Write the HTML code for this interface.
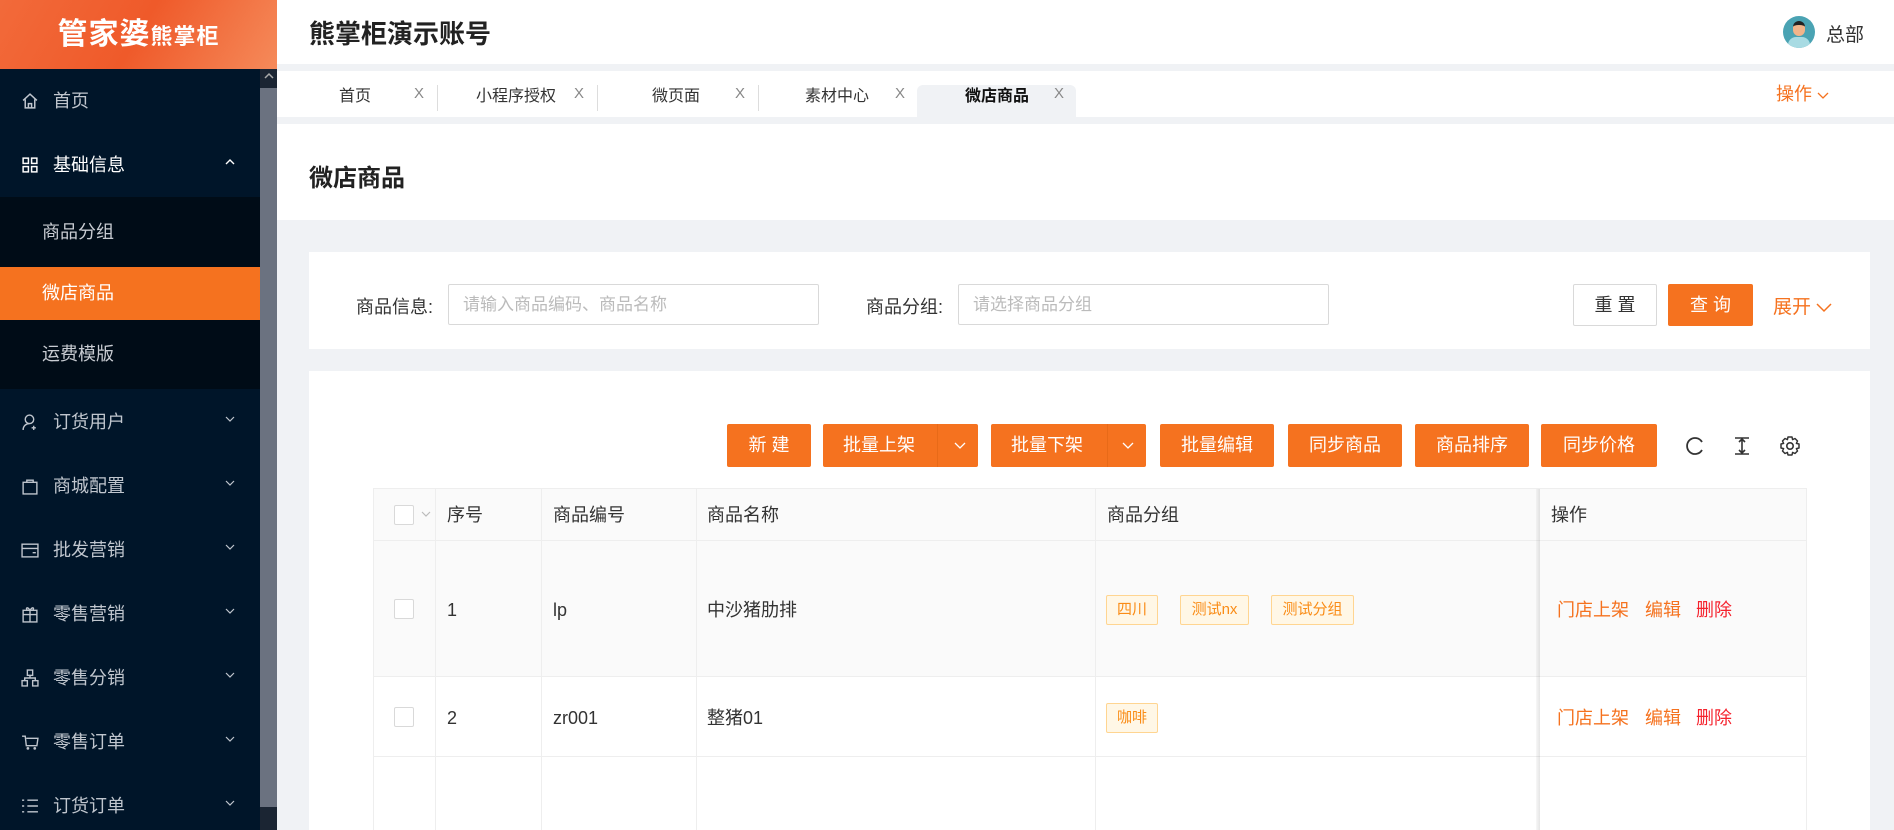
<!DOCTYPE html>
<html><head><meta charset="utf-8"><style>
*{box-sizing:border-box;margin:0;padding:0}
html,body{width:1894px;height:830px;overflow:hidden}
body{background:#f0f2f5;font-family:"Liberation Sans","Noto Sans CJK SC",sans-serif;position:relative;color:#333}
.abs{position:absolute}
#side{left:0;top:0;width:277px;height:830px;background:#001529}
#logo{left:0;top:0;width:277px;height:69px;background:linear-gradient(120deg,#f26a3a 0%,#ef5a2a 50%,#f58a5a 100%);color:#fff;font-size:30px;font-weight:bold;text-align:center;line-height:69px;letter-spacing:1px}
#logo small{font-size:22px;font-weight:bold}
.mi{position:absolute;left:0;width:260px;height:64px;color:#c0c6ce;font-size:18px;line-height:64px}
.mi .t{position:absolute;left:53px}
.mi .ic{position:absolute;left:21px;top:23px;width:18px;height:18px}
.mi .ar{position:absolute;left:225px;top:24px;width:10px;height:10px}
.sub{position:absolute;left:0;width:260px;height:64px;color:#c8ccd2;font-size:18px;line-height:64px;padding-left:42px;background:#000c17}
#sb{left:260px;top:69px;width:17px;height:761px;background:#1b2533}
#sbt{left:260px;top:88px;width:17px;height:719px;background:#6b7280}
.hdr{left:277px;top:0;width:1617px;height:64px;background:#fff}
.tabs{left:277px;top:71px;width:1617px;height:46px;background:#fff}
.tab{position:absolute;top:0;height:46px;line-height:52px;font-size:16px;color:#333}
.x{position:absolute;top:0;font-size:15px;color:#888;line-height:46px}
.sep{position:absolute;top:14px;width:1px;height:26px;background:#ddd}
.btn{position:absolute;top:424px;height:43px;background:#f5721f;color:#fff;font-size:18px;line-height:43px;text-align:center;border-radius:2px}
.th,.td{position:absolute;font-size:18px;color:#333;line-height:24px}
.tag{position:absolute;height:30px;border:1px solid #ffd591;background:#fff7e6;color:#fa8c16;font-size:15px;line-height:28px;text-align:center;border-radius:2px}
.cb{position:absolute;left:394px;width:20px;height:20px;border:1px solid #d9d9d9;border-radius:2px;background:#fff}
</style></head><body>
<div id="side" class="abs"></div>
<div id="logo" class="abs">管家婆<small>熊掌柜</small></div>
<div id="sb" class="abs"></div><div id="sbt" class="abs"></div>
<svg class="abs" style="left:263px;top:72px" width="12" height="8"><path d="M2 6L6 2L10 6" stroke="#aaa" fill="none" stroke-width="1.5"/></svg>

<div class="mi" style="top:69px"><svg class="ic" viewBox="0 0 17 17"><path d="M2 8L8.5 2L15 8M4 7V15H13V7M7 15V11H10V15" stroke="#c0c6ce" fill="none" stroke-width="1.4"/></svg><span class="t">首页</span></div>
<div class="mi" style="top:133px;color:#fff"><svg class="ic" viewBox="0 0 17 17"><rect x="2" y="2" width="5" height="5" stroke="#fff" fill="none" stroke-width="1.4"/><rect x="10" y="2" width="5" height="5" stroke="#fff" fill="none" stroke-width="1.4"/><rect x="2" y="10" width="5" height="5" stroke="#fff" fill="none" stroke-width="1.4"/><rect x="10" y="10" width="5" height="5" stroke="#fff" fill="none" stroke-width="1.4"/></svg><span class="t">基础信息</span><svg class="ar" viewBox="0 0 10 10"><path d="M1 7L5 3L9 7" stroke="#fff" fill="none" stroke-width="1.4"/></svg></div>
<div class="sub" style="top:197px;height:70px;line-height:70px">商品分组</div>
<div class="sub" style="top:267px;height:53px;line-height:53px;background:#f5721f;color:#fff">微店商品</div>
<div class="sub" style="top:320px;height:69px;line-height:69px">运费模版</div>

<div class="mi" style="top:390px"><svg class="ic" viewBox="0 0 17 17"><circle cx="8" cy="6" r="4" stroke="#c0c6ce" fill="none" stroke-width="1.3"/><path d="M2 16C2 12 5 10 8 10M12 12V16M10 14H14" stroke="#c0c6ce" fill="none" stroke-width="1.3"/></svg><span class="t">订货用户</span><svg class="ar" viewBox="0 0 10 10"><path d="M1 3L5 7L9 3" stroke="#c0c6ce" fill="none" stroke-width="1.2"/></svg></div>
<div class="mi" style="top:454px"><svg class="ic" viewBox="0 0 17 17"><rect x="2" y="5" width="13" height="11" stroke="#c0c6ce" fill="none" stroke-width="1.3"/><path d="M5.5 5V3H11.5V5" stroke="#c0c6ce" fill="none" stroke-width="1.3"/></svg><span class="t">商城配置</span><svg class="ar" viewBox="0 0 10 10"><path d="M1 3L5 7L9 3" stroke="#c0c6ce" fill="none" stroke-width="1.2"/></svg></div>
<div class="mi" style="top:518px"><svg class="ic" viewBox="0 0 17 17"><rect x="1" y="3" width="15" height="12" stroke="#c0c6ce" fill="none" stroke-width="1.3"/><path d="M1 7H16M11 11H14" stroke="#c0c6ce" stroke-width="1.3"/></svg><span class="t">批发营销</span><svg class="ar" viewBox="0 0 10 10"><path d="M1 3L5 7L9 3" stroke="#c0c6ce" fill="none" stroke-width="1.2"/></svg></div>
<div class="mi" style="top:582px"><svg class="ic" viewBox="0 0 17 17"><rect x="2" y="5" width="13" height="11" stroke="#c0c6ce" fill="none" stroke-width="1.3"/><path d="M2 9H15M8.5 5V16M8.5 5C6 1 4 3 6 5M8.5 5C11 1 13 3 11 5" stroke="#c0c6ce" fill="none" stroke-width="1.3"/></svg><span class="t">零售营销</span><svg class="ar" viewBox="0 0 10 10"><path d="M1 3L5 7L9 3" stroke="#c0c6ce" fill="none" stroke-width="1.2"/></svg></div>
<div class="mi" style="top:646px"><svg class="ic" viewBox="0 0 17 17"><rect x="6" y="1" width="5" height="5" stroke="#c0c6ce" fill="none" stroke-width="1.3"/><rect x="1" y="11" width="5" height="5" stroke="#c0c6ce" fill="none" stroke-width="1.3"/><rect x="11" y="11" width="5" height="5" stroke="#c0c6ce" fill="none" stroke-width="1.3"/><path d="M8.5 6V8.5H3.5V11M8.5 8.5H13.5V11" stroke="#c0c6ce" fill="none" stroke-width="1.3"/></svg><span class="t">零售分销</span><svg class="ar" viewBox="0 0 10 10"><path d="M1 3L5 7L9 3" stroke="#c0c6ce" fill="none" stroke-width="1.2"/></svg></div>
<div class="mi" style="top:710px"><svg class="ic" viewBox="0 0 17 17"><path d="M1 3H4L5 12H15L16 5H5" stroke="#c0c6ce" fill="none" stroke-width="1.3"/><circle cx="6.5" cy="14.5" r="1.3" fill="#c0c6ce"/><circle cx="13" cy="14.5" r="1.3" fill="#c0c6ce"/></svg><span class="t">零售订单</span><svg class="ar" viewBox="0 0 10 10"><path d="M1 3L5 7L9 3" stroke="#c0c6ce" fill="none" stroke-width="1.2"/></svg></div>
<div class="mi" style="top:774px"><svg class="ic" viewBox="0 0 17 17"><path d="M6 3H16M6 8.5H16M6 14H16M1 3H3M1 8.5H3M1 14H3" stroke="#c0c6ce" stroke-width="1.3"/></svg><span class="t">订货订单</span><svg class="ar" viewBox="0 0 10 10"><path d="M1 3L5 7L9 3" stroke="#c0c6ce" fill="none" stroke-width="1.2"/></svg></div>

<div class="abs hdr"></div>
<div class="abs" style="left:309px;top:14px;font-size:26px;font-weight:bold;color:#222">熊掌柜演示账号</div>
<div class="abs" style="left:1783px;top:16px;width:32px;height:32px;border-radius:50%;background:#4aa3b3;overflow:hidden"><div style="position:absolute;left:10px;top:5px;width:12px;height:15px;border-radius:6px;background:#f2b48a;border-top:4px solid #222"></div><div style="position:absolute;left:5px;top:21px;width:22px;height:14px;border-radius:8px 8px 0 0;background:#a8dbe3"></div></div>
<div class="abs" style="left:1826px;top:20px;font-size:19px;color:#333">总部</div>

<div class="abs tabs">
<div class="tab" style="left:62px">首页</div><div class="x" style="left:137px">X</div><div class="sep" style="left:160px"></div>
<div class="tab" style="left:199px">小程序授权</div><div class="x" style="left:297px">X</div><div class="sep" style="left:320px"></div>
<div class="tab" style="left:375px">微页面</div><div class="x" style="left:458px">X</div><div class="sep" style="left:481px"></div>
<div class="tab" style="left:528px">素材中心</div><div class="x" style="left:618px">X</div>
<div style="position:absolute;left:640px;top:14px;width:159px;height:32px;background:#f0f2f5;border-radius:6px 6px 0 0"></div>
<div class="tab" style="left:688px;font-weight:bold;color:#111">微店商品</div><div class="x" style="left:777px">X</div>
<div class="tab" style="left:1499px;color:#f5721f;font-size:18px;line-height:46px">操作 <svg width="12" height="8"><path d="M1 1L6 6L11 1" stroke="#f5721f" fill="none" stroke-width="1.3"/></svg></div>
</div>

<div class="abs" style="left:277px;top:124px;width:1617px;height:96px;background:#fff"></div>
<div class="abs" style="left:309px;top:158px;font-size:24px;font-weight:bold;color:#222">微店商品</div>

<div class="abs" style="left:309px;top:252px;width:1561px;height:97px;background:#fff"></div>
<div class="abs" style="left:356px;top:293px;font-size:18px;color:#333">商品信息:</div>
<div class="abs" style="left:448px;top:284px;width:371px;height:41px;border:1px solid #d9d9d9;border-radius:2px;font-size:17px;color:#bbb;line-height:39px;padding-left:14px">请输入商品编码、商品名称</div>
<div class="abs" style="left:866px;top:293px;font-size:18px;color:#333">商品分组:</div>
<div class="abs" style="left:958px;top:284px;width:371px;height:41px;border:1px solid #d9d9d9;border-radius:2px;font-size:17px;color:#bbb;line-height:39px;padding-left:14px">请选择商品分组</div>
<div class="abs" style="left:1573px;top:284px;width:84px;height:42px;border:1px solid #d9d9d9;border-radius:2px;font-size:18px;line-height:40px;text-align:center;color:#333">重 置</div>
<div class="abs" style="left:1668px;top:284px;width:85px;height:42px;background:#f5721f;border-radius:2px;font-size:18px;line-height:42px;text-align:center;color:#fff">查 询</div>
<div class="abs" style="left:1773px;top:292px;font-size:19px;color:#f5721f">展开 <svg width="16" height="10"><path d="M1 1L8 8L15 1" stroke="#f5721f" fill="none" stroke-width="1.5"/></svg></div>

<div class="abs" style="left:309px;top:371px;width:1561px;height:470px;background:#fff"></div>
<div class="btn" style="left:727px;width:84px">新 建</div>
<div class="btn" style="left:823px;width:155px;text-align:left;padding-left:20px">批量上架<span style="position:absolute;left:114px;top:0;width:1px;height:43px;background:#e86a18"></span><svg style="position:absolute;left:131px;top:18px" width="12" height="8"><path d="M1 1L6 6L11 1" stroke="#fff" fill="none" stroke-width="1.3"/></svg></div>
<div class="btn" style="left:991px;width:155px;text-align:left;padding-left:20px">批量下架<span style="position:absolute;left:116px;top:0;width:1px;height:43px;background:#e86a18"></span><svg style="position:absolute;left:131px;top:18px" width="12" height="8"><path d="M1 1L6 6L11 1" stroke="#fff" fill="none" stroke-width="1.3"/></svg></div>
<div class="btn" style="left:1160px;width:114px">批量编辑</div>
<div class="btn" style="left:1288px;width:114px">同步商品</div>
<div class="btn" style="left:1415px;width:114px">商品排序</div>
<div class="btn" style="left:1541px;width:116px">同步价格</div>
<svg class="abs" style="left:1684px;top:435px" width="22" height="22" viewBox="0 0 22 22"><path d="M18 7A8 8 0 1 0 18 15" stroke="#333" fill="none" stroke-width="1.8"/></svg>
<svg class="abs" style="left:1731px;top:435px" width="22" height="22" viewBox="0 0 22 22"><path d="M4 3H18M4 19H18M11 5V17M8 7L11 4L14 7M8 15L11 18L14 15" stroke="#333" fill="none" stroke-width="1.6"/></svg>
<svg class="abs" style="left:1779px;top:435px" width="22" height="22" viewBox="0 0 22 22"><circle cx="11" cy="11" r="3.2" stroke="#333" fill="none" stroke-width="1.6"/><path d="M9 2H13L13.6 4.6L16 3.5L18.5 6L17.4 8.4L20 9V13L17.4 13.6L18.5 16L16 18.5L13.6 17.4L13 20H9L8.4 17.4L6 18.5L3.5 16L4.6 13.6L2 13V9L4.6 8.4L3.5 6L6 3.5L8.4 4.6Z" stroke="#333" fill="none" stroke-width="1.5" stroke-linejoin="round"/></svg>

<div class="abs" style="left:373px;top:488px;width:1434px;height:350px;border:1px solid #eee;border-bottom:none"></div>
<div class="abs" style="left:374px;top:489px;width:1432px;height:52px;background:#fafafa;border-bottom:1px solid #eee"></div>
<div class="abs" style="left:374px;top:541px;width:1432px;height:136px;background:#fafafa;border-bottom:1px solid #eee"></div>
<div class="abs" style="left:374px;top:756px;width:1432px;height:1px;background:#eee"></div>
<div class="abs" style="left:435px;top:489px;width:1px;height:341px;background:#eee"></div>
<div class="abs" style="left:541px;top:489px;width:1px;height:341px;background:#eee"></div>
<div class="abs" style="left:696px;top:489px;width:1px;height:341px;background:#eee"></div>
<div class="abs" style="left:1095px;top:489px;width:1px;height:341px;background:#eee"></div>
<div class="abs" style="left:1536px;top:489px;width:4px;height:341px;background:linear-gradient(90deg,rgba(0,0,0,0.03),rgba(0,0,0,0.1))"></div>
<div class="cb" style="top:505px"></div>
<svg class="abs" style="left:421px;top:511px" width="10" height="7"><path d="M1 1L5 5L9 1" stroke="#bbb" fill="none" stroke-width="1.2"/></svg>
<div class="th" style="left:447px;top:503px">序号</div>
<div class="th" style="left:553px;top:503px">商品编号</div>
<div class="th" style="left:707px;top:503px">商品名称</div>
<div class="th" style="left:1107px;top:503px">商品分组</div>
<div class="th" style="left:1551px;top:503px">操作</div>

<div class="cb" style="top:599px"></div>
<div class="td" style="left:447px;top:598px">1</div>
<div class="td" style="left:553px;top:598px">lp</div>
<div class="td" style="left:707px;top:598px">中沙猪肋排</div>
<div class="tag" style="left:1106px;top:595px;width:52px">四川</div>
<div class="tag" style="left:1180px;top:595px;width:69px">测试nx</div>
<div class="tag" style="left:1271px;top:595px;width:83px">测试分组</div>
<div class="td" style="left:1557px;top:598px;color:#f5721f">门店上架</div>
<div class="td" style="left:1645px;top:598px;color:#f5721f">编辑</div>
<div class="td" style="left:1696px;top:598px;color:#f5222d">删除</div>

<div class="cb" style="top:707px"></div>
<div class="td" style="left:447px;top:706px">2</div>
<div class="td" style="left:553px;top:706px">zr001</div>
<div class="td" style="left:707px;top:706px">整猪01</div>
<div class="tag" style="left:1106px;top:703px;width:52px">咖啡</div>
<div class="td" style="left:1557px;top:706px;color:#f5721f">门店上架</div>
<div class="td" style="left:1645px;top:706px;color:#f5721f">编辑</div>
<div class="td" style="left:1696px;top:706px;color:#f5222d">删除</div>
</body></html>
